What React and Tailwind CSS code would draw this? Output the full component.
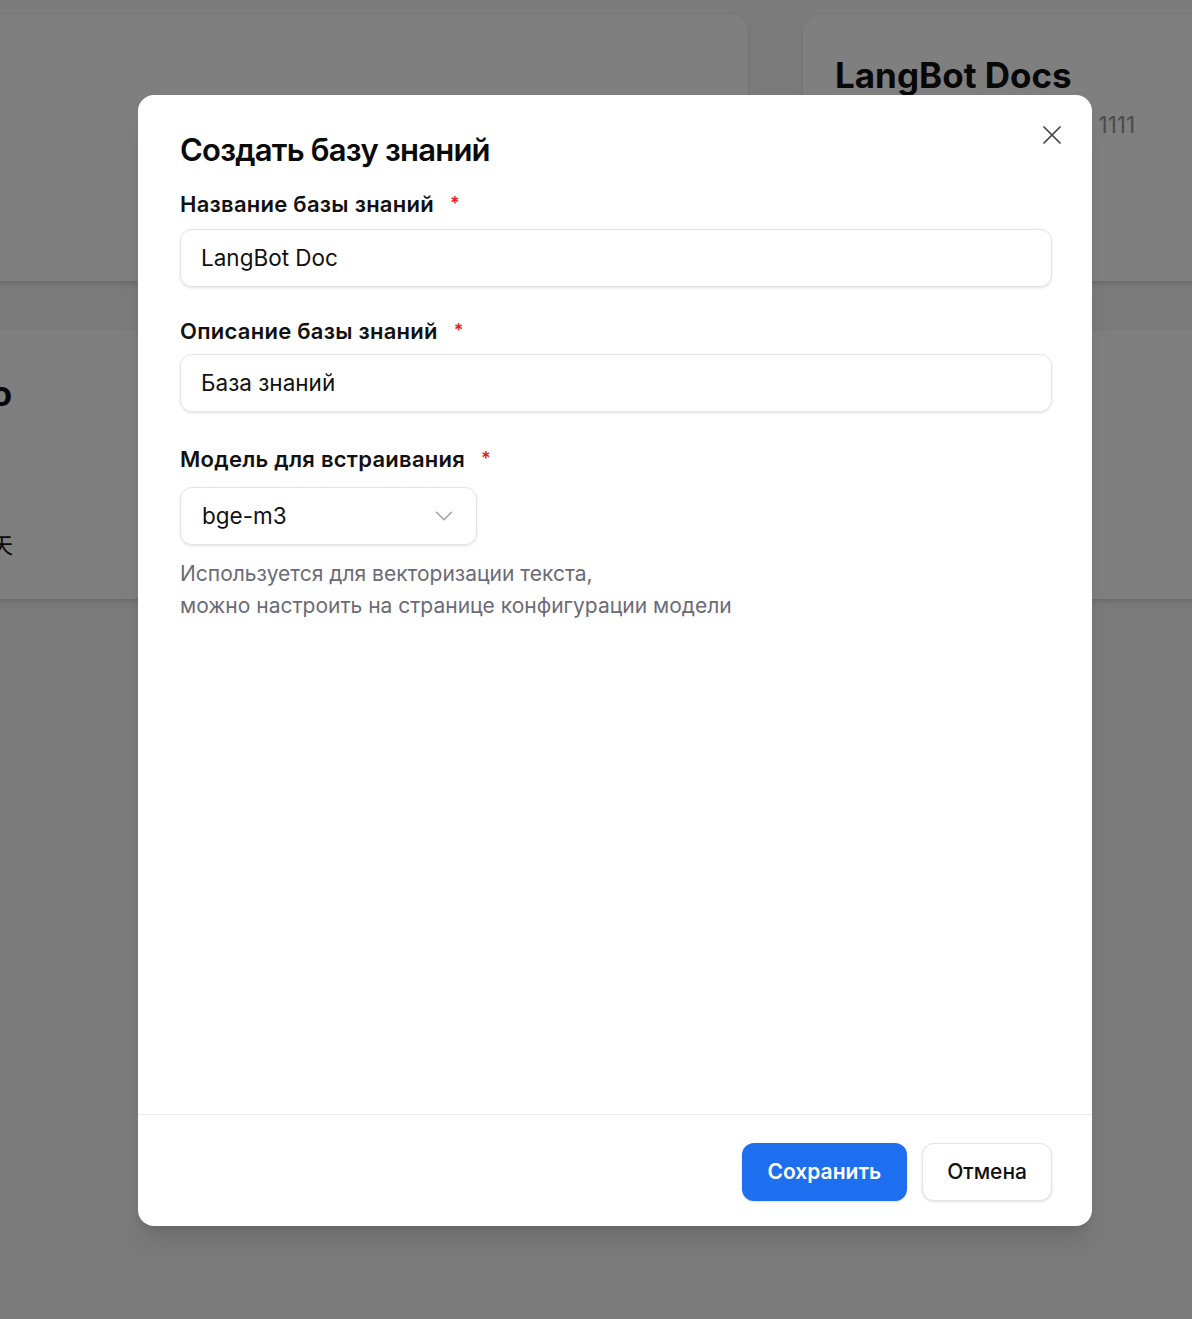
import React from 'react'
import { X, ChevronDown } from 'lucide-react'

const font = { fontFamily: 'Inter, "Noto Sans", "Noto Sans CJK SC", sans-serif' }

const BgCard = ({ title, desc }) => (
  <div className="h-[266px] rounded-2xl bg-white px-8 pt-[38px] shadow-md">
    {title && <div className="text-[35px] font-bold leading-[44px] text-[#111]">{title}</div>}
    {desc && <div className="mt-[13px] text-[22.5px] leading-[30px] text-[#999]">{desc}</div>}
  </div>
)

const Field = ({ label, children, className = '' }) => (
  <div className={className}>
    <div className="flex items-center gap-[16px] text-[22px] font-semibold leading-[28px] tracking-[0.012em] text-[#111]">
      <span>{label}</span>
      <span className="text-[18px] text-[#ef1b1b]">*</span>
    </div>
    {children}
  </div>
)

export default function App() {
  return (
    <div className="relative min-h-[1319px] overflow-hidden bg-[#f6f6f6]" style={font}>
      {/* page behind the dialog */}
      <div className="ml-[-114px] grid w-[1779px] grid-cols-2 gap-x-[55px] gap-y-[50px] pt-[15px]">
        <BgCard />
        <BgCard title="LangBot Docs" desc="Документация LangBot 1111" />
        <div className="h-[268px] rounded-2xl bg-white px-8 pt-[41px] shadow-md">
          <div className="text-[34px] font-bold leading-[44px] tracking-tight text-[#111]">Demo</div>
          <div className="ml-[-19px] mt-[114px] text-[22px] leading-[30px] text-[#111]">更新于 3 天</div>
        </div>
        <div className="h-[268px] rounded-2xl bg-white shadow-md" />
      </div>

      {/* overlay */}
      <div className="absolute inset-0 flex items-center bg-black/50">
        <div className="ml-[138px] mt-[2px] flex h-[1131px] w-[954px] flex-col rounded-2xl bg-white shadow-xl">
          <div className="relative flex-1 pl-[42px] pr-[40px] pt-[33px]">
            <button className="absolute right-[24px] top-[24px] text-[#444]">
              <X size={32} strokeWidth={1.3} />
            </button>
            <h2 className="text-[31px] font-semibold leading-[44px] tracking-tight text-[#0a0a0a]">Создать базу знаний</h2>

            <Field label="Название базы знаний" className="mt-[18px]">
              <div className="mt-[11px] flex h-[58px] items-center rounded-xl border border-[#e4e4e7] px-5 text-[22.5px] text-[#111] shadow-sm">
                LangBot Doc
              </div>
            </Field>

            <Field label="Описание базы знаний" className="mt-[30px]">
              <div className="mt-[9px] flex h-[58px] items-center rounded-xl border border-[#e4e4e7] px-5 text-[22.5px] text-[#111] shadow-sm">
                База знаний
              </div>
            </Field>

            <Field label="Модель для встраивания" className="mt-[33px]">
              <div className="mt-[14px] flex h-[58px] w-[297px] items-center justify-between rounded-xl border border-[#e4e4e7] pl-[21px] pr-[17px] text-[22.5px] text-[#111] shadow-sm">
                <span>bge-m3</span>
                <ChevronDown size={30} strokeWidth={1.2} className="text-[#a1a1aa]" />
              </div>
            </Field>

            <p className="mt-[13px] text-[21px] leading-[32px] text-[#6b6b78]">
              Используется для векторизации текста,
              <br />
              можно настроить на странице конфигурации модели
            </p>
          </div>

          <div className="flex justify-end gap-[15px] border-t border-[#ececee] pb-[25px] pl-[42px] pr-[40px] pt-[28px]">
            <button className="h-[58px] rounded-xl bg-[#1d6fef] px-[26px] text-[21px] font-semibold text-white shadow-sm">
              Сохранить
            </button>
            <button className="h-[58px] rounded-xl border border-[#e4e4e7] bg-white px-[24px] text-[21px] font-medium text-[#111] shadow-sm">
              Отмена
            </button>
          </div>
        </div>
      </div>
    </div>
  )
}
